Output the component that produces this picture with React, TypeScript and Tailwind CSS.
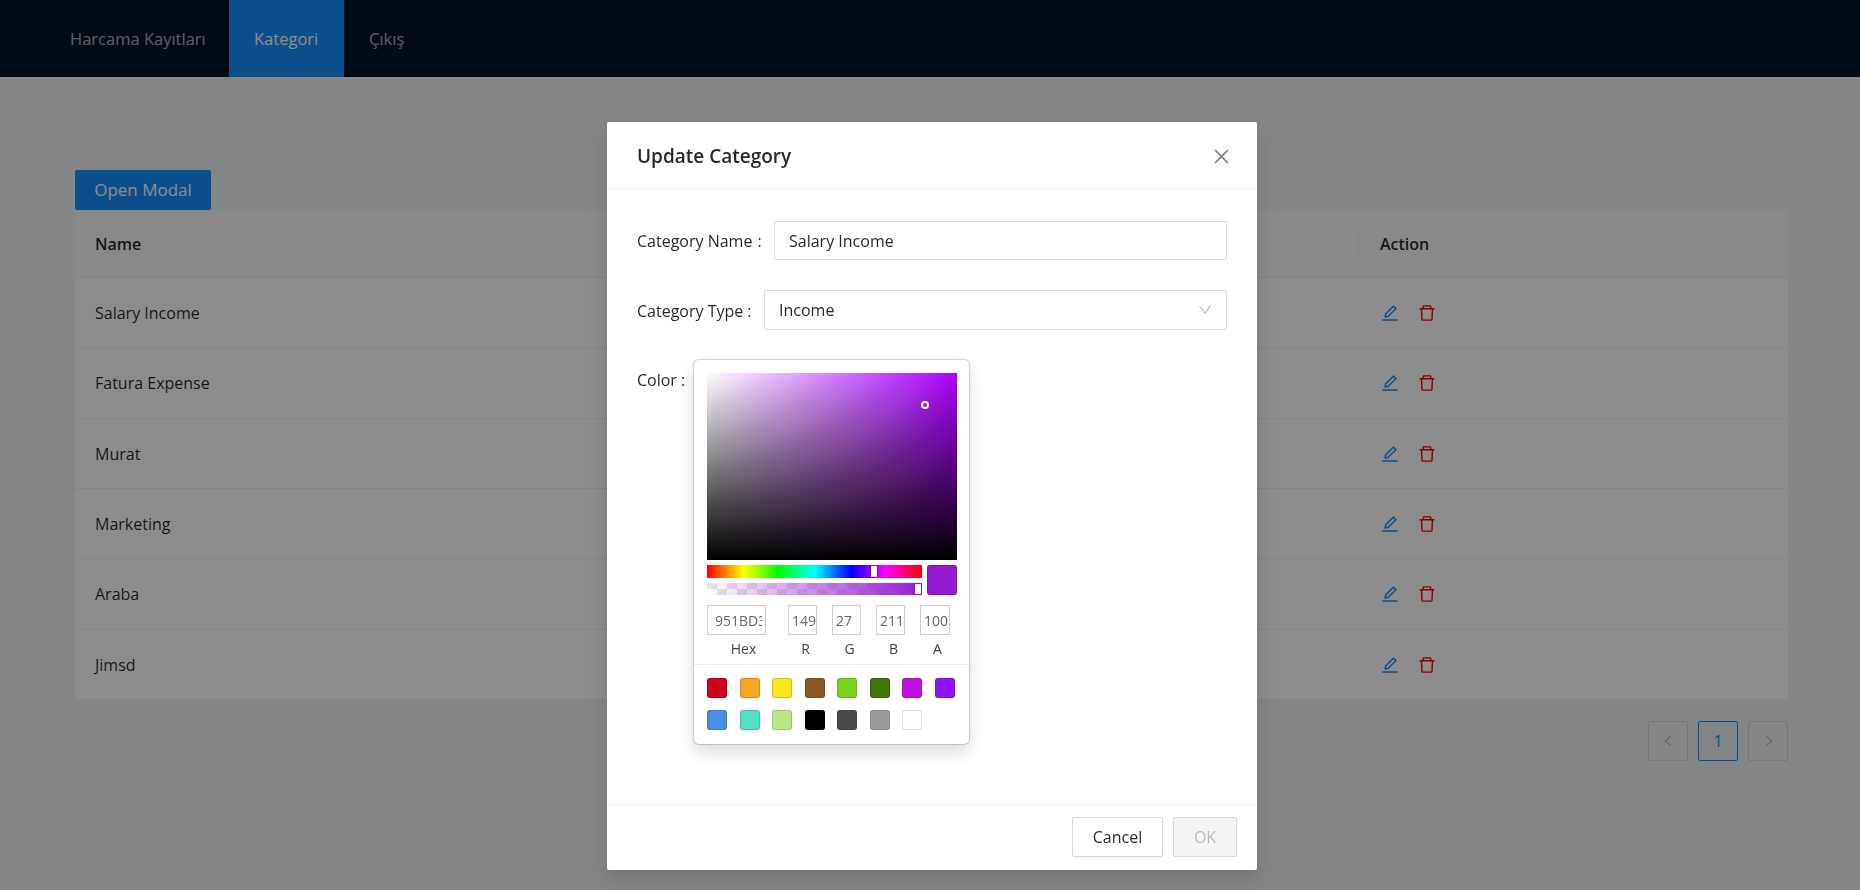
import { AiOutlineClose, AiOutlineDelete, AiOutlineDown, AiOutlineEdit, AiOutlineLeft, AiOutlineRight } from 'react-icons/ai';

const rows = ['Salary Income', 'Fatura Expense', 'Murat', 'Marketing', 'Araba', 'Jimsd'];

const swatches = [
  'bg-[#D0021B]', 'bg-[#F5A623]', 'bg-[#F8E71C]', 'bg-[#8B572A]', 'bg-[#7ED321]',
  'bg-[#417505]', 'bg-[#BD10E0]', 'bg-[#9013FE]', 'bg-[#4A90E2]', 'bg-[#50E3C2]',
  'bg-[#B8E986]', 'bg-[#000000]', 'bg-[#4A4A4A]', 'bg-[#9B9B9B]', 'bg-[#FFFFFF]',
];

const channels = [
  { label: 'R', value: '149', className: 'w-[29px] ml-[22px]', labelClass: 'pl-[6px]' },
  { label: 'G', value: '27', className: 'w-[29px] ml-[15px]', labelClass: 'pl-[6px]' },
  { label: 'B', value: '211', className: 'w-[29px] ml-[15px]', labelClass: 'pl-[6px]' },
  { label: 'A', value: '100', className: 'w-[30px] ml-[15px]', labelClass: 'pl-[5px]' },
];

function ColorPicker() {
  return (
    <div className="absolute left-[87px] top-[238px] w-[275px] h-[384px] bg-white rounded-[5px] shadow-[0_0_0_1px_rgba(0,0,0,0.15),0_8px_16px_rgba(0,0,0,0.15)] font-['Open_Sans',sans-serif]">
      <div className="pl-[13px] pr-[12px] pt-[13px]">
        {/* saturation */}
        <div className="relative h-[187px] bg-[#aa00ff] bg-[linear-gradient(to_top,#000,rgba(0,0,0,0)),linear-gradient(to_right,#fff,rgba(255,255,255,0))]">
          <div className="absolute left-[214px] top-[28px] w-[8px] h-[8px] rounded-full border-[2px] border-white" />
        </div>

        <div className="flex gap-[5px] mt-[5px]">
          <div className="w-[215px]">
            <div className="relative h-[13px] bg-[linear-gradient(to_right,#f00_0%,#ff0_17%,#0f0_33%,#0ff_50%,#00f_67%,#f0f_83%,#f00_100%)]">
              <div className="absolute left-[164px] top-[1px] w-[6px] h-[11px] bg-white rounded-[1px] shadow-[0_0_2px_rgba(0,0,0,0.6)]" />
            </div>
            <div className="relative h-[12px] mt-[5px] bg-[linear-gradient(to_right,rgba(149,27,211,0),rgb(149,27,211)),repeating-conic-gradient(#fff_0_25%,#e6e6e6_0_50%)] [background-size:100%_100%,20px_12px]">
              <div className="absolute left-[208px] top-[1px] w-[6px] h-[10px] bg-white rounded-[1px] shadow-[0_0_2px_rgba(0,0,0,0.6)]" />
            </div>
          </div>
          <div className="w-[30px] h-[30px] rounded-[3px] bg-[#951bd3] shadow-[inset_0_0_0_1px_rgba(0,0,0,0.15)]" />
        </div>

        <div className="flex mt-[10px]">
          <div className="w-[59px]">
            <input
              readOnly
              value="951BD3"
              className="w-full h-[30px] pl-[7px] pr-[3px] text-[14px] text-[#666] border border-[#ccc] outline-none"
            />
            <div className="mt-[4px] h-[20px] pl-[14px] text-center text-[14px] leading-[20px] text-[#444]">Hex</div>
          </div>
          {channels.map((c) => (
            <div key={c.label} className={c.className}>
              <input
                readOnly
                value={c.value}
                className="w-full h-[30px] pl-[3px] pr-0 text-[14px] text-[#666] border border-[#ccc] outline-none"
              />
              <div className={`mt-[4px] h-[20px] text-center text-[14px] leading-[20px] text-[#444] ${c.labelClass}`}>
                {c.label}
              </div>
            </div>
          ))}
        </div>
      </div>

      <div className="mt-[5px] h-px bg-[#eee]" />

      <div className="flex flex-wrap gap-x-[12.5px] gap-y-[12px] pl-[13px] pt-[13px]">
        {swatches.map((s) => (
          <div key={s} className={`w-[20px] h-[20px] rounded-[3px] shadow-[inset_0_0_0_1px_rgba(0,0,0,0.15)] ${s}`} />
        ))}
      </div>
    </div>
  );
}

function UpdateModal() {
  return (
    <div className="fixed inset-0 bg-black/45 flex justify-center pt-[122px] pl-[4px]">
      <div className="relative w-[650px] h-[748px] bg-white rounded-[2px] flex flex-col text-[16px] text-black/85 shadow-[0_3px_6px_-4px_rgba(0,0,0,0.12),0_6px_16px_rgba(0,0,0,0.08),0_9px_28px_8px_rgba(0,0,0,0.05)]">
        <div className="h-[67px] flex items-center justify-between pl-[30px] pr-[25px] pt-[2px] border-b border-[#f0f0f0]">
          <h2 className="text-[19px] font-semibold text-black/85">Update Category</h2>
          <AiOutlineClose className="w-[21px] h-[21px] text-black/50" />
        </div>

        <div className="flex-1 px-[30px] pt-[32px]">
          <div className="flex items-center h-[39px]">
            <label className="w-[137px] shrink-0">Category Name<span className="ml-[5px]">:</span></label>
            <input
              readOnly
              value="Salary Income"
              className="flex-1 h-[39px] px-[14px] text-[16px] text-black/85 border border-[#d9d9d9] rounded-[2px] outline-none"
            />
          </div>
          <div className="flex items-center h-[40px] mt-[30px]">
            <label className="w-[127px] shrink-0 pt-px">Category Type<span className="ml-[4px]">:</span></label>
            <div className="flex-1 h-[40px] flex items-center justify-between pl-[14px] pr-[13px] border border-[#d9d9d9] rounded-[2px]">
              <span>Income</span>
              <AiOutlineDown className="w-[16px] h-[16px] text-black/25" />
            </div>
          </div>
          <div className="mt-[38px]">
            <label>Color<span className="ml-[4px]">:</span></label>
          </div>
        </div>

        <div className="h-[66px] flex items-start justify-end gap-[10px] pt-[12px] pr-[20px] border-t border-[#f0f0f0]">
          <button className="w-[91px] h-[40px] border border-[#d9d9d9] rounded-[2px] bg-white text-black/85 shadow-[0_2px_0_rgba(0,0,0,0.015)]">
            Cancel
          </button>
          <button disabled className="w-[64px] h-[40px] border border-[#d9d9d9] rounded-[2px] bg-[#f5f5f5] text-black/25">
            OK
          </button>
        </div>

        <ColorPicker />
      </div>
    </div>
  );
}

export default function App() {
  return (
    <div className="min-h-[890px] bg-[#f0f2f5] font-['Open_Sans',sans-serif] text-[16px] text-black/85">
      <nav className="h-[77px] bg-[#001529] flex pl-[44px] text-[16.5px]">
        <a className="w-[185px] pl-[26px] leading-[77px] text-white/65">Harcama Kayıtları</a>
        <a className="w-[115px] pl-[25px] leading-[77px] text-white bg-[#1890ff]">Kategori</a>
        <a className="px-[25px] leading-[77px] text-white/65">Çıkış</a>
      </nav>

      <main className="pl-[75px] pr-[72px] pt-[93px]">
        <button className="block w-[136px] h-[40px] rounded-[2px] bg-[#1890ff] text-white text-[17px]">Open Modal</button>

        <div className="bg-white">
          <div className="h-[68px] flex items-center bg-[#fafafa] border-b border-[#f0f0f0] font-semibold">
            <div className="flex-1 pl-[20px]">Name</div>
            <div className="w-px h-[29px] bg-black/5 mr-[21px]" />
            <div className="w-[408px]">Action</div>
          </div>
          {rows.map((name) => (
            <div key={name} className="h-[70.33px] flex items-center border-b border-[#f0f0f0] pt-px">
              <div className="flex-1 pl-[20px]">{name}</div>
              <div className="w-[408px] flex items-center gap-[16.5px] -ml-[3px]">
                <AiOutlineEdit className="w-[20px] h-[20px] text-[#1890ff]" />
                <AiOutlineDelete className="w-[20px] h-[20px] text-[#ff0000]" />
              </div>
            </div>
          ))}
        </div>

        <div className="flex justify-end gap-[10px] mt-[21px]">
          <div className="w-[40px] h-[40px] flex items-center justify-center border border-[#d9d9d9] rounded-[2px] text-black/25">
            <AiOutlineLeft className="w-[14px] h-[14px]" />
          </div>
          <div className="w-[40px] h-[40px] flex items-center justify-center border border-[#1890ff] rounded-[2px] text-[#1890ff]">
            1
          </div>
          <div className="w-[40px] h-[40px] flex items-center justify-center border border-[#d9d9d9] rounded-[2px] text-black/25">
            <AiOutlineRight className="w-[14px] h-[14px] translate-x-px" />
          </div>
        </div>
      </main>

      <UpdateModal />
    </div>
  );
}
